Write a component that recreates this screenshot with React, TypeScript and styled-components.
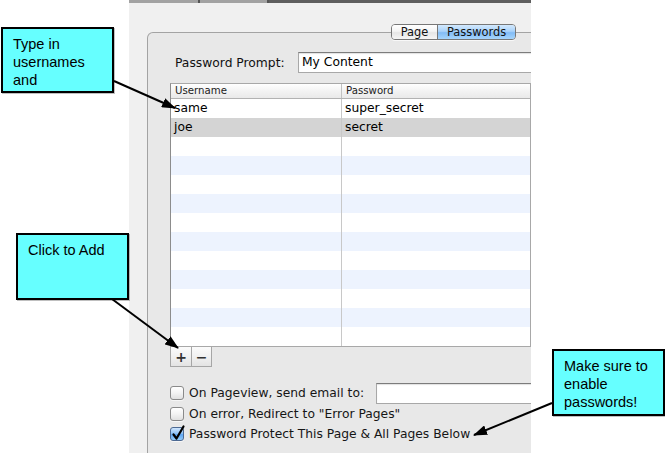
import React from "react";
import styled, { createGlobalStyle } from "styled-components";

const GlobalStyle = createGlobalStyle`
  html, body { margin: 0; padding: 0; background: #ffffff; }
  body { width: 665px; height: 453px; overflow: hidden; font-family: "DejaVu Sans", "Liberation Sans", sans-serif; }
  #root { position: relative; width: 665px; height: 453px; }
`;

const Page = styled.div`
  position: relative;
  display: flex;
  width: 665px;
  height: 453px;
  overflow: hidden;
  background: #ffffff;
`;

const Gutter = styled.div<{ $w: number }>`
  width: ${(p) => p.$w}px;
  flex: none;
`;

const Window = styled.div`
  width: 402px;
  flex: none;
  height: 453px;
  background: #f0f0f0;
  overflow: hidden;
  display: flex;
  flex-direction: column;
`;

const TitleStrip = styled.div`
  display: flex;
  height: 3px;
  flex: none;
  background: #5e5e5e;
`;

const StripTab = styled.div<{ $w: number }>`
  width: ${(p) => p.$w}px;
  flex: none;
  background: #a2a2a2;
  border-right: 2px solid #555;
  box-sizing: border-box;
`;

const GroupBox = styled.div`
  margin-top: 29px;
  margin-left: 18px;
  width: 440px;
  flex: 1;
  border: 1px solid #a3a3a3;
  border-bottom: none;
  border-top-left-radius: 6px;
  background: #e8e8e8;
  display: flex;
  flex-direction: column;
`;

const TabRow = styled.div`
  display: flex;
  margin-top: -9px;
  margin-left: 243px;
`;

const Segmented = styled.div`
  display: flex;
  height: 16px;
  box-sizing: border-box;
  border: 1px solid #777;
  border-radius: 4px;
  overflow: hidden;
  box-shadow: 0 1px 0 rgba(255, 255, 255, 0.7);
`;

const Segment = styled.div<{ $w: number; $active?: boolean }>`
  width: ${(p) => p.$w}px;
  height: 14px;
  line-height: 14px;
  font-size: 11.4px;
  text-align: center;
  color: #111;
  background: ${(p) =>
    p.$active
      ? "linear-gradient(to bottom, #d3e9fd 0%, #a9d2fa 45%, #82bcf6 55%, #a6d5fc 100%)"
      : "linear-gradient(to bottom, #ffffff 0%, #f4f4f4 45%, #e6e6e6 55%, #f6f6f6 100%)"};
  & + & {
    border-left: 1px solid #777;
  }
`;

const PromptRow = styled.div`
  display: flex;
  align-items: center;
  height: 21px;
  margin-top: 12px;
  margin-left: 27px;
`;

const PromptLabel = styled.div`
  width: 123px;
  flex: none;
  font-size: 12.3px;
  color: #111;
`;

const TextField = styled.div<{ $w: number }>`
  width: ${(p) => p.$w}px;
  height: 21px;
  flex: none;
  box-sizing: border-box;
  background: #ffffff;
  border: 1px solid #a8a8a8;
  border-top-color: #7c7c7c;
  box-shadow: inset 0 1px 1px rgba(0, 0, 0, 0.12);
  padding-left: 3px;
  font-size: 12.3px;
  line-height: 19px;
  color: #000;
`;

const Table = styled.div`
  margin-top: 10px;
  margin-left: 22px;
  width: 361px;
  box-sizing: border-box;
  border: 1px solid #a8a8a8;
  border-left-color: #8c8c8c;
  background: #ffffff;
`;

const HeaderRow = styled.div`
  display: grid;
  grid-template-columns: 170px 1fr;
  height: 14px;
  border-bottom: 1px solid #b2b2b2;
  background: linear-gradient(to bottom, #ffffff 0%, #f3f3f3 50%, #e9e9e9 100%);
`;

const HeaderCell = styled.div`
  font-size: 10.2px;
  line-height: 14px;
  padding-left: 4px;
  color: #222;
  & + & {
    border-left: 1px solid #c2c2c2;
  }
`;

const Row = styled.div<{ $bg: string }>`
  display: grid;
  grid-template-columns: 170px 1fr;
  height: 19px;
  background: ${(p) => p.$bg};
`;

const Cell = styled.div`
  font-size: 12.3px;
  line-height: 19px;
  padding-left: 3px;
  color: #000;
  & + & {
    border-left: 1px solid #c8c8c8;
  }
`;

const ButtonRow = styled.div`
  display: flex;
  margin-left: 22px;
`;

const SmallButton = styled.div<{ $w: number }>`
  width: ${(p) => p.$w}px;
  height: 20px;
  box-sizing: border-box;
  border: 1px solid #a6a6a6;
  border-top: none;
  background: linear-gradient(to bottom, #fbfbfb 0%, #f1f1f1 50%, #e3e3e3 100%);
  display: flex;
  align-items: center;
  justify-content: center;
  font-size: 14px;
  font-weight: bold;
  color: #333;
  & + & {
    border-left: none;
  }
`;

const Checks = styled.div`
  display: flex;
  flex-direction: column;
  margin-top: 16px;
  margin-left: 22px;
`;

const CheckRow = styled.div<{ $gap?: number }>`
  display: flex;
  align-items: center;
  height: 20px;
  margin-top: ${(p) => p.$gap ?? 0}px;
`;

const Box = styled.div<{ $checked?: boolean }>`
  position: relative;
  width: 14px;
  height: 14px;
  flex: none;
  box-sizing: border-box;
  border-radius: 3px;
  border: 1px solid ${(p) => (p.$checked ? "#4d6a93" : "#8a8a8a")};
  background: ${(p) =>
    p.$checked
      ? "linear-gradient(to bottom, #cfe5fd 0%, #8fc3f8 45%, #5ea6f3 55%, #93cbfa 100%)"
      : "linear-gradient(to bottom, #ffffff 0%, #f3f3f3 50%, #e0e0e0 100%)"};
  box-shadow: 0 1px 0 rgba(255, 255, 255, 0.6);
`;

const CheckMark = styled.svg`
  position: absolute;
  left: 0px;
  top: -3px;
  overflow: visible;
`;

const CheckLabel = styled.div<{ $w?: number }>`
  margin-left: 5px;
  font-size: 12.3px;
  color: #161616;
  white-space: nowrap;
  ${(p) => (p.$w ? `width: ${p.$w}px; flex: none;` : "")}
`;

const Callout = styled.div<{ $x: number; $y: number; $w: number; $h: number }>`
  position: absolute;
  left: ${(p) => p.$x}px;
  top: ${(p) => p.$y}px;
  width: ${(p) => p.$w}px;
  height: ${(p) => p.$h}px;
  box-sizing: border-box;
  border: 2px solid #000;
  background: #66ffff;
  padding: 6px 0 0 10px;
  font-family: "Liberation Sans", Arial, sans-serif;
  font-size: 14.5px;
  line-height: 18px;
  color: #000;
  box-shadow: 1px 1px 0 rgba(0, 0, 0, 0.25);
`;

const Arrows = styled.svg`
  position: absolute;
  left: 0;
  top: 0;
  pointer-events: none;
`;

const rows: [string, string][] = [
  ["same", "super_secret"],
  ["joe", "secret"],
  ...Array.from({ length: 11 }, () => ["", ""] as [string, string]),
];

const rowBg = (i: number) => (i === 1 ? "#d4d4d4" : i % 2 === 1 ? "#edf3fe" : "#ffffff");

export default function App() {
  return (
    <>
      <GlobalStyle />
      <Page>
        <Gutter $w={129} />
        <Window>
          <TitleStrip>
            <StripTab $w={71} />
            <StripTab $w={69} />
          </TitleStrip>
          <GroupBox>
            <TabRow>
              <Segmented>
                <Segment $w={45}>Page</Segment>
                <Segment $w={77} $active>
                  Passwords
                </Segment>
              </Segmented>
            </TabRow>
            <PromptRow>
              <PromptLabel>Password Prompt:</PromptLabel>
              <TextField $w={260}>My Content</TextField>
            </PromptRow>
            <Table>
              <HeaderRow>
                <HeaderCell>Username</HeaderCell>
                <HeaderCell>Password</HeaderCell>
              </HeaderRow>
              {rows.map(([u, p], i) => (
                <Row key={i} $bg={rowBg(i)}>
                  <Cell>{u}</Cell>
                  <Cell>{p}</Cell>
                </Row>
              ))}
            </Table>
            <ButtonRow>
              <SmallButton $w={22}>+</SmallButton>
              <SmallButton $w={20}>−</SmallButton>
            </ButtonRow>
            <Checks>
              <CheckRow>
                <Box />
                <CheckLabel $w={187}>On Pageview, send email to:</CheckLabel>
                <TextField $w={200} />
              </CheckRow>
              <CheckRow $gap={1}>
                <Box />
                <CheckLabel>On error, Redirect to "Error Pages"</CheckLabel>
              </CheckRow>
              <CheckRow>
                <Box $checked>
                  <CheckMark width="14" height="16" viewBox="0 0 14 16">
                    <path
                      d="M2.5 9.5 L5.5 13.5 L12.5 1.5"
                      fill="none"
                      stroke="#000"
                      strokeWidth="2.2"
                      strokeLinecap="round"
                      strokeLinejoin="round"
                    />
                  </CheckMark>
                </Box>
                <CheckLabel>Password Protect This Page &amp; All Pages Below</CheckLabel>
              </CheckRow>
            </Checks>
          </GroupBox>
        </Window>

        <Callout $x={1} $y={27} $w={113} $h={66}>
          Type in
          <br />
          usernames
          <br />
          and
        </Callout>
        <Callout $x={16} $y={233} $w={113} $h={67}>
          Click to Add
        </Callout>
        <Callout $x={552} $y={349} $w={113} $h={67}>
          Make sure to
          <br />
          enable
          <br />
          passwords!
        </Callout>

        <Arrows width="665" height="453" viewBox="0 0 665 453">
          <defs>
            <marker
              id="ah"
              markerUnits="userSpaceOnUse"
              markerWidth="14"
              markerHeight="10"
              refX="13"
              refY="5"
              orient="auto"
            >
              <path d="M0 0 L14 5 L0 10 Z" fill="#000" />
            </marker>
          </defs>
          <line x1="114" y1="81" x2="175" y2="108" stroke="#000" strokeWidth="2" markerEnd="url(#ah)" />
          <line x1="112" y1="299" x2="178" y2="348" stroke="#000" strokeWidth="2" markerEnd="url(#ah)" />
          <line x1="552" y1="403" x2="474" y2="435" stroke="#000" strokeWidth="2" markerEnd="url(#ah)" />
        </Arrows>
      </Page>
    </>
  );
}
